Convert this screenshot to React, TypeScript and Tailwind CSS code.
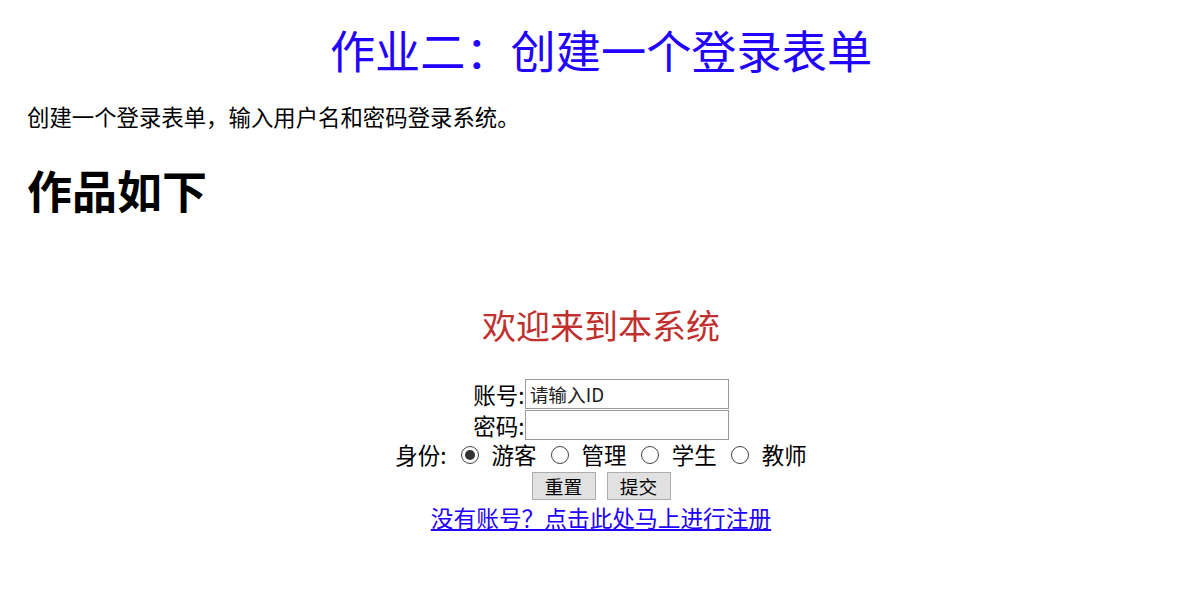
import React from "react";

const font = {
  fontFamily: '"Microsoft YaHei", "Noto Sans CJK SC", "Noto Sans", sans-serif',
};

const roles = ["游客", "管理", "学生", "教师"];

const Radio = ({ checked }: { checked?: boolean }) => (
  <span className="inline-flex w-[18px] h-[18px] rounded-full border border-[#444] bg-white items-center justify-center">
    {checked && <span className="block w-[10px] h-[10px] rounded-full bg-[#333]" />}
  </span>
);

const App = () => {
  return (
    <div className="w-[1192px] h-[616px] bg-white text-black pl-[27px] pr-[17px]" style={font}>
      <h1 className="pt-[22px] h-[78px] text-[45.2px] leading-[56px] text-center text-[#2200ff] font-normal">
        作业二：创建一个登录表单
      </h1>
      <p className="mt-[23px] h-[30px] text-[22.4px] leading-[30px]">
        创建一个登录表单，输入用户名和密码登录系统。
      </p>
      <h2 className="mt-[31px] h-[56px] text-[45px] leading-[56px] font-bold">作品如下</h2>

      <div className="mt-[85px] h-[44px] text-[34px] leading-[44px] text-center text-[#c0302f]">
        欢迎来到本系统
      </div>

      <form className="mt-[31px] flex flex-col items-center text-[22.5px]">
        <div className="h-[31px] flex items-center">
          <label className="leading-[30px]">账号:</label>
          <input
            type="text"
            defaultValue="请输入ID"
            className="w-[204px] h-[30px] border border-[#999] px-[4px] text-[18.7px] text-[#222] outline-none"
            style={font}
          />
        </div>
        <div className="h-[31px] flex items-center">
          <label className="leading-[30px]">密码:</label>
          <input
            type="password"
            className="w-[204px] h-[30px] border border-[#999] px-[4px] text-[18.7px] outline-none"
          />
        </div>
        <div className="h-[30px] flex items-center">
          <span className="mr-[14px]">身份:</span>
          {roles.map((r, i) => (
            <span key={r} className="flex items-center">
              <Radio checked={i === 0} />
              <span className={`ml-[13px] ${i < roles.length - 1 ? "mr-[14px]" : ""}`}>{r}</span>
            </span>
          ))}
        </div>
        <div className="h-[31px] flex items-center gap-[11px]">
          <button
            type="button"
            className="w-[64px] h-[28px] bg-[#e1e1e1] border border-[#adadad] text-[18.7px] leading-[26px]"
            style={font}
          >
            重置
          </button>
          <button
            type="button"
            className="w-[64px] h-[28px] bg-[#e1e1e1] border border-[#adadad] text-[18.7px] leading-[26px]"
            style={font}
          >
            提交
          </button>
        </div>
        <a href="#" className="mt-[2px] h-[30px] leading-[30px] text-[22.7px] text-[#2200ff] underline">
          没有账号？点击此处马上进行注册
        </a>
      </form>
    </div>
  );
};

export default App;
